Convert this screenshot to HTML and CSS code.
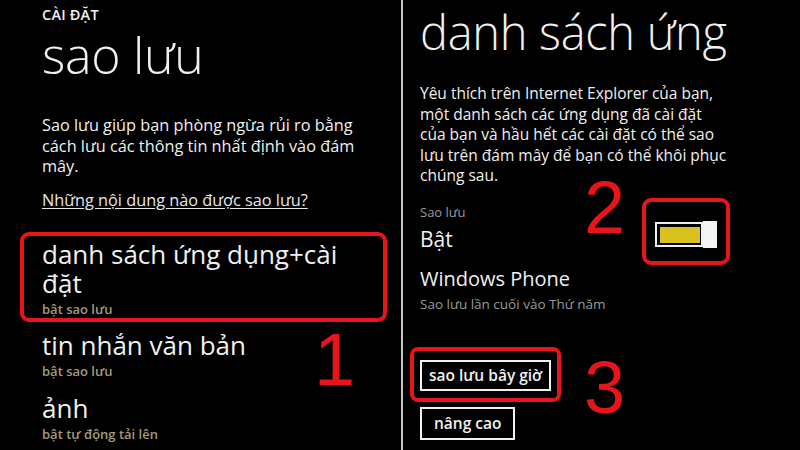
FILE: index.html
```html
<!DOCTYPE html>
<html lang="vi">
<head>
<meta charset="utf-8">
<link rel="stylesheet" href="styles.css">
</head>
<body>
<div class="screen">
  <section class="panel left">
    <div class="kicker">CÀI ĐẶT</div>
    <h1 class="title">sao lưu</h1>
    <p class="desc">Sao lưu giúp bạn phòng ngừa rủi ro bằng cách lưu các thông tin nhất định vào đám mây.</p>
    <div class="link-row"><a class="link">Những nội dung nào được sao lưu?</a></div>
    <div class="hl">
      <div class="item-title">danh sách ứng dụng+cài đặt</div>
      <div class="item-sub">bật sao lưu</div>
    </div>
    <div class="item">
      <div class="item-title">tin nhắn văn bản</div>
      <div class="item-sub">bật sao lưu</div>
    </div>
    <div class="item">
      <div class="item-title">ảnh</div>
      <div class="item-sub">bật tự động tải lên</div>
    </div>
    <div class="num num1">1</div>
  </section>
  <div class="divider"></div>
  <section class="panel right">
    <div class="kicker cut">CÀI ĐẶT</div>
    <h1 class="title rtitle">danh sách ứng</h1>
    <p class="rdesc">Yêu thích trên Internet Explorer của bạn,<br>một danh sách các ứng dụng đã cài đặt<br>của bạn và hầu hết các cài đặt có thể sao<br>lưu trên đám mây để bạn có thể khôi phục<br>chúng sau.</p>
    <div class="label first">Sao lưu</div>
    <div class="value state">Bật</div>
    <div class="value acct">Windows Phone</div>
    <div class="label last">Sao lưu lần cuối vào Thứ năm</div>
    <div class="buttons">
      <div class="hl-btn"><span class="btn">sao lưu bây giờ</span></div>
      <span class="btn adv">nâng cao</span>
    </div>
    <div class="toggle-box">
      <div class="toggle"><span class="track"><span class="fill"></span></span><span class="knob"></span></div>
    </div>
    <div class="num num2">2</div>
    <div class="num num3">3</div>
  </section>
</div>
</body>
</html>
```
FILE: styles.css
```css
html, body {
  margin: 0;
  padding: 0;
  background: #000;
}
.screen {
  display: flex;
  width: 800px;
  height: 450px;
  overflow: hidden;
  background: #000;
  color: #f0f0f0;
  font-family: "Open Sans", "Noto Sans", sans-serif;
}
.panel {
  position: relative;
  overflow: hidden;
}
.left {
  width: 401px;
  padding-left: 42px;
  box-sizing: border-box;
}
.divider {
  width: 2px;
  background: #c4c4c4;
}
.right {
  flex: 1;
  padding-left: 17px;
}
.kicker {
  font-size: 14.5px;
  font-weight: 600;
  line-height: 20px;
  margin-top: 5px;
  letter-spacing: 0.2px;
}
.kicker.cut {
  margin-top: -18px;
  color: #777;
}
.title {
  margin: 0;
  font-size: 50px;
  font-weight: 300;
  line-height: 60px;
  letter-spacing: -0.3px;
}
.rtitle {
  font-size: 47px;
  line-height: 52px;
  margin-top: 4px;
  white-space: nowrap;
}
.desc {
  margin: 30px 0 0;
  font-size: 16.3px;
  line-height: 20.5px;
  width: 318px;
}
.link-row {
  margin-top: 13px;
  font-size: 16.3px;
  line-height: 20.5px;
}
.link {
  text-decoration: underline;
  text-underline-offset: 2px;
  color: #e8e8e8;
}
.hl {
  margin: 22px 14px 0 -22px;
  border: 4px solid #e8141c;
  border-radius: 9px;
  padding: 4px 18px 0 18px;
}
.item-title {
  font-size: 26px;
  line-height: 29px;
}
.item-sub {
  margin-top: 2px;
  font-size: 13px;
  font-weight: 600;
  line-height: 18px;
  color: #a39a7c;
}
.item {
  margin-top: 14px;
}
.hl + .item {
  margin-top: 9px;
}
.rdesc {
  margin: 25px 0 0;
  font-size: 15.5px;
  line-height: 20.5px;
  white-space: nowrap;
}
.label {
  font-size: 13px;
  line-height: 18px;
  color: #9a9a9a;
}
.label.first {
  margin-top: 17px;
}
.label.last {
  margin-top: 2px;
  font-size: 13.5px;
}
.value {
  line-height: 28px;
}
.state {
  font-size: 21px;
  margin-top: 4px;
}
.acct {
  font-size: 20px;
  margin-top: 12px;
}
.buttons {
  margin-top: 34px;
  display: flex;
  flex-direction: column;
  align-items: flex-start;
  gap: 5px;
}
.hl-btn {
  margin-left: -10px;
  border: 4px solid #e8141c;
  border-radius: 8px;
  padding: 9px 6px 7px 6px;
}
.btn {
  display: block;
  border: 2.5px solid #f2f2f2;
  padding: 0 7px;
  height: 27px;
  line-height: 27px;
  font-size: 15.5px;
  font-weight: 600;
}
.btn.adv {
  height: 29px;
  line-height: 29px;
  padding: 0 12px;
}
.toggle-box {
  position: absolute;
  left: 239px;
  top: 198px;
  width: 80px;
  height: 59px;
  border: 4px solid #e8141c;
  border-radius: 9px;
  display: flex;
  align-items: center;
  justify-content: center;
}
.toggle {
  display: flex;
  align-items: center;
  margin-top: 6px;
}
.track {
  width: 48px;
  height: 25px;
  box-sizing: border-box;
  border: 2.5px solid #eee;
  padding: 2.5px 1px 2.5px 3px;
  display: flex;
}
.fill {
  flex: 1;
  background: #d8c31c;
}
.knob {
  width: 14px;
  height: 27px;
  background: #f4f4f4;
}
.num {
  position: absolute;
  color: #e8141c;
  font-family: "Liberation Sans", Arial, sans-serif;
  font-size: 74px;
  line-height: 1;
}
.num1 { left: 314px; top: 323px; }
.num2 { left: 181px; top: 171px; }
.num3 { left: 181px; top: 351px; }
```
